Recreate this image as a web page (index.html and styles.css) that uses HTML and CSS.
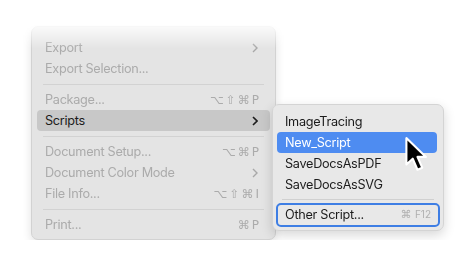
FILE: index.html
```html
<!DOCTYPE html>
<html lang="en">
<head>
  <meta charset="UTF-8">
  <title>File menu</title>
  <link rel="stylesheet" href="styles.css">
</head>
<body>
  <div class="stage">
    <div class="menu">
      <div class="item">Export<span class="chev"><svg width="6" height="10" viewBox="0 0 6 10"><path d="M1 1l4 4-4 4" fill="none" stroke="currentColor" stroke-width="1.4"/></svg></span></div>
      <div class="item">Export Selection...</div>
      <div class="sep"></div>
      <div class="item">Package...<span class="keys">⌥⇧⌘P</span></div>
      <div class="item open">Scripts<span class="chev"><svg width="6" height="10" viewBox="0 0 6 10"><path d="M1 1l4 4-4 4" fill="none" stroke="currentColor" stroke-width="1.6"/></svg></span>
        <div class="submenu">
          <div class="sub">ImageTracing</div>
          <div class="sub active">New_Script</div>
          <div class="sub">SaveDocsAsPDF</div>
          <div class="sub">SaveDocsAsSVG</div>
          <div class="sep"></div>
          <div class="sub other">Other Script...<span class="keys small">⌘ <b>F12</b></span></div>
          <svg class="cursor" width="28" height="38" viewBox="0 0 26 36">
            <path d="M2 2 L2 27 L8 21.5 L12.5 32 L17 30 L12.5 19.8 L20.5 19.8 Z" fill="#000" stroke="#fff" stroke-width="2" stroke-linejoin="round"/>
          </svg>
        </div>
      </div>
      <div class="sep"></div>
      <div class="item">Document Setup...<span class="keys">⌥⌘P</span></div>
      <div class="item">Document Color Mode<span class="chev"><svg width="6" height="10" viewBox="0 0 6 10"><path d="M1 1l4 4-4 4" fill="none" stroke="currentColor" stroke-width="1.4"/></svg></span></div>
      <div class="item">File Info...<span class="keys">⌥⇧⌘I</span></div>
      <div class="sep"></div>
      <div class="item">Print...<span class="keys">⌘P</span></div>
    </div>
  </div>
</body>
</html>
```

FILE: styles.css
```css
* { box-sizing: border-box; }
html, body { margin:0; padding:0; }
body {
  background:#fff;
  font-family: Inter, 'Noto Sans', sans-serif;
  font-size:12.7px;
  letter-spacing:-0.3px;
  width:474px; height:265px; overflow:hidden;
}
/* main menu, faded out at the top edge */
.stage {
  padding:26px 0 0 31px;
  -webkit-mask-image: linear-gradient(to bottom, transparent 0, transparent 22px, #000 48px);
  mask-image: linear-gradient(to bottom, transparent 0, transparent 22px, #000 48px);
}
.menu {
  width:245px;
  background:#e4e4e4;
  border:1px solid #d2d2d2;
  border-radius:7px;
  box-shadow:0 3px 10px rgba(0,0,0,0.12);
  padding:10px 5px 4px;
}
.item {
  position:relative;
  display:flex; align-items:center; justify-content:space-between;
  height:21px;
  padding:0 11px 0 8px;
  color:#ababab;
  border-radius:4px;
}
.item.open { background:#c8c8c8; color:#1c1c1c; }
.sep { height:1px; background:#d2d2d2; margin:4.5px 6px 4.5px; }
.chev { display:flex; color:#a8a8a8; padding-right:1px; }
.open .chev { color:#1c1c1c; }
.keys {
  font-family:'DejaVu Sans', sans-serif;
  font-size:12px; color:#ababab;
  letter-spacing:2px; margin-right:-2px;
}
/* Scripts submenu */
.submenu {
  position:absolute; left:235px; top:-6px;
  width:172px;
  background:#e8e8e8;
  border:1px solid #d4d4d4;
  border-radius:7px;
  box-shadow:0 4px 12px rgba(0,0,0,0.16);
  padding:6px 4px 3px;
  color:#1c1c1c;
}
.sub {
  display:flex; align-items:center; justify-content:space-between;
  height:21px; padding:0 8px; border-radius:4px;
}
.sub.active { background:#4e8cf1; color:#fff; margin-right:2px; }
.submenu .sep { margin:3.5px 5px 3px; background:#d0d0d0; }
.sub.other {
  height:24px; margin:0 -1px;
  border:2px solid #3e7ee4; border-radius:5px;
  padding:0 7px;
}
.keys.small { font-size:11px; letter-spacing:0; color:#b0b0b0; margin-right:0; }
.keys.small b { font-family:Inter, sans-serif; font-weight:400; font-size:10px; }
.cursor { position:absolute; left:131px; top:31px; }
```
